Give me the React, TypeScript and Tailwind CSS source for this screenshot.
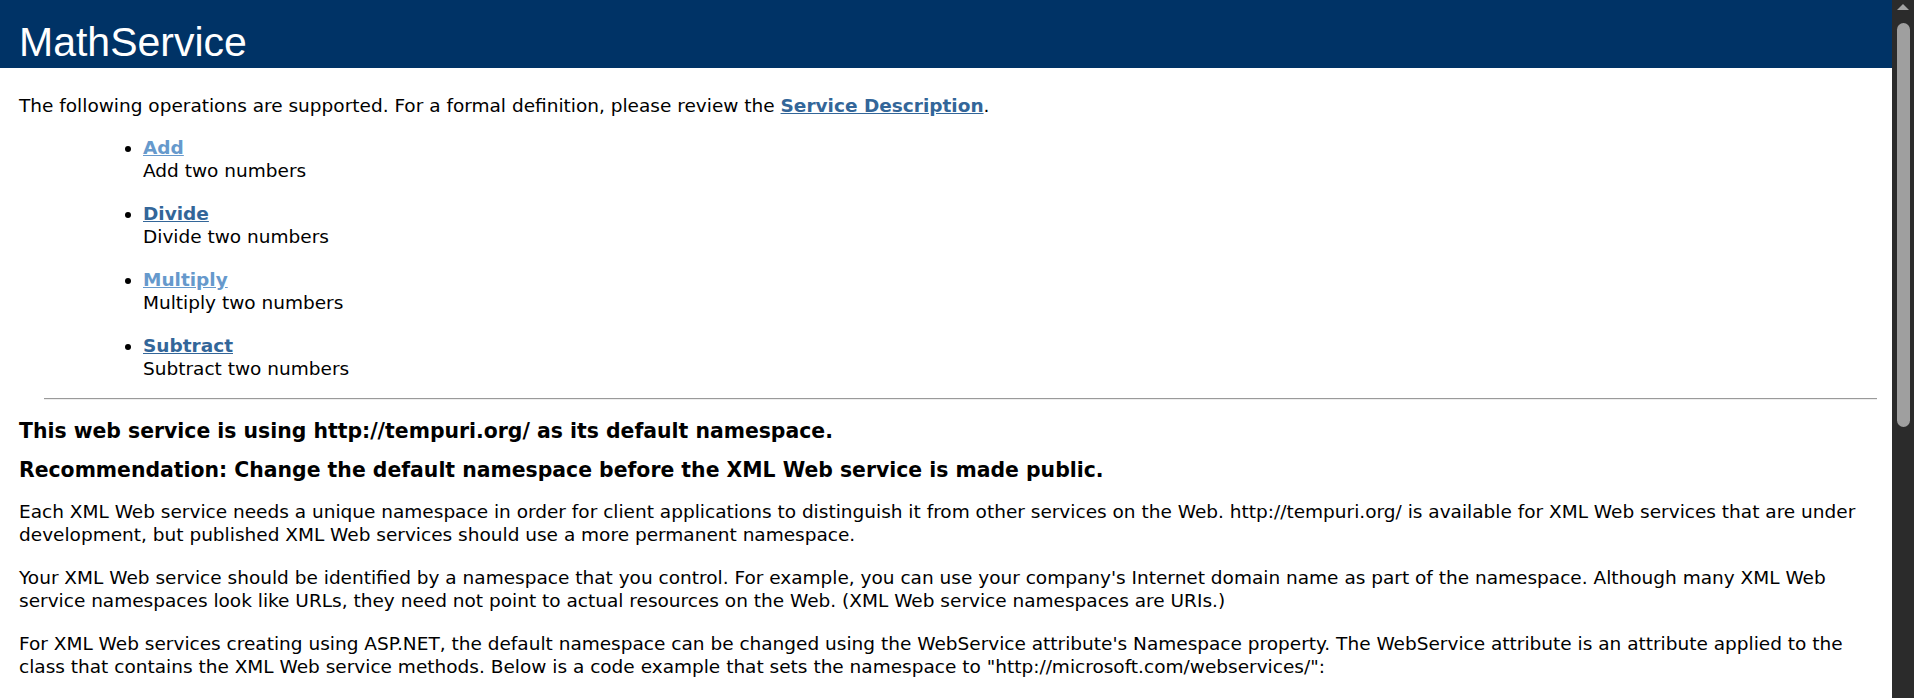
const operations = [
  { name: 'Add', description: 'Add two numbers', visited: true },
  { name: 'Divide', description: 'Divide two numbers', visited: false },
  { name: 'Multiply', description: 'Multiply two numbers', visited: true },
  { name: 'Subtract', description: 'Subtract two numbers', visited: false },
]

function Scrollbar() {
  return (
    <div className="flex w-[22px] shrink-0 flex-col items-center bg-[#2b2b2b]">
      <svg width="12" height="6" viewBox="0 0 12 6" className="mt-[4px]">
        <polygon points="6,0 12,6 0,6" fill="#a3a3a3" />
      </svg>
      <div className="mt-[13px] h-[404px] w-[13px] rounded-full bg-[#9f9f9f]" />
    </div>
  )
}

export default function App() {
  return (
    <div className="flex h-[698px] overflow-hidden bg-white font-['DejaVu_Sans',Verdana,sans-serif] text-[18.5px] leading-[23px] text-black">
      <div className="min-w-0 flex-1">
        <div className="h-[68px] bg-[#003366] pl-[19px] pt-[22px]">
          <h1 className="font-['Liberation_Sans',Tahoma,sans-serif] text-[41px] font-normal leading-[41px] text-white">
            MathService
          </h1>
        </div>

        <div className="pl-[19px] pr-[22px]">
          <p className="mt-[26px]">
            The following operations are supported. For a formal definition, please review the{' '}
            <a href="#" className="font-bold text-[#336699] underline">
              Service Description
            </a>
            .
          </p>

          <ul className="mt-[19px] list-disc pl-[124px]">
            {operations.map((op, i) => (
              <li key={op.name} className={i > 0 ? 'mt-[20px]' : ''}>
                <a
                  href="#"
                  className={`font-bold underline ${op.visited ? 'text-[#6699cc]' : 'text-[#336699]'}`}
                >
                  {op.name}
                </a>
                <br />
                {op.description}
              </li>
            ))}
          </ul>

          <hr className="mt-[18px] ml-[25px] mr-[-7px] border-t border-b border-t-[#9a9a9a] border-b-[#eeeeee]" />

          <h3 className="mt-[20px] text-[20.4px] font-bold">
            This web service is using http://tempuri.org/ as its default namespace.
          </h3>
          <h3 className="mt-[16px] text-[20.4px] font-bold">
            Recommendation: Change the default namespace before the XML Web service is made public.
          </h3>

          <p className="mt-[18px]">
            Each XML Web service needs a unique namespace in order for client applications to distinguish it from
            other services on the Web. http://tempuri.org/ is available for XML Web services that are under
            development, but published XML Web services should use a more permanent namespace.
          </p>
          <p className="mt-[20px]">
            Your XML Web service should be identified by a namespace that you control. For example, you can use your
            company's Internet domain name as part of the namespace. Although many XML Web service namespaces look
            like URLs, they need not point to actual resources on the Web. (XML Web service namespaces are URIs.)
          </p>
          <p className="mt-[20px]">
            For XML Web services creating using ASP.NET, the default namespace can be changed using the WebService
            attribute's Namespace property. The WebService attribute is an attribute applied to the class that
            contains the XML Web service methods. Below is a code example that sets the namespace to
            "http://microsoft.com/webservices/":
          </p>
        </div>
      </div>
      <Scrollbar />
    </div>
  )
}
